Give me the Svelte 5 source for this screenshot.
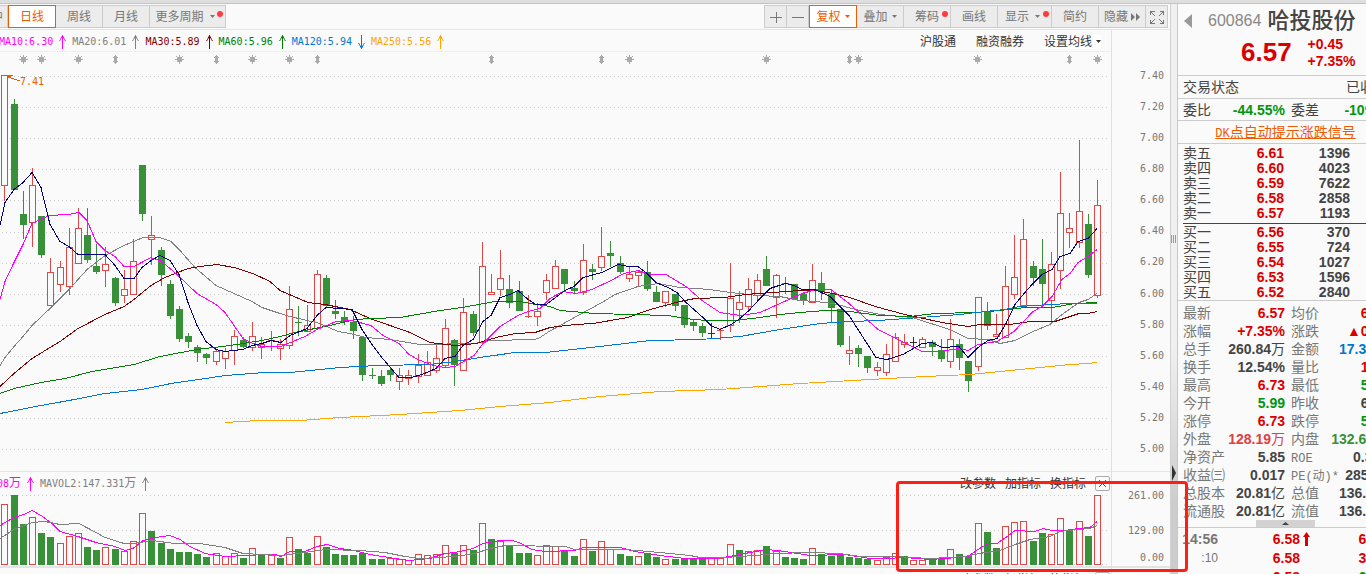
<script lang="ts">
  // kind, high, body top, body bottom, low (chart units)
  const candleData = `r 75 75 185 200,g 99 104 190 190,g 191 214 225 239,r 168 185 222 246,g 216 216 255 258,r 258 272 305 305,
r 261 267 284 291,r 228 247 286 294,r 208 228 263 263,g 208 235 260 263,g 244 266 272 274,r 247 264 270 286,
g 277 278 303 306,r 270 289 295 302,r 239 261 294 294,g 165 165 214 221,r 216 235 239 264,g 247 250 275 286,
g 280 284 316 319,g 306 309 339 342,g 333 336 342 348,g 345 347 353 362,g 353 354 358 364,r 349 351 361 364,
r 348 351 358 368,r 330 336 350 364,g 337 340 347 348,r 322 336 347 350,r 337 344 347 358,r 331 340 341 351,
r 339 344 348 359,r 286 309 345 348,g 306 322 323 336,r 305 325 331 331,r 270 274 328 328,g 275 278 306 307,
g 300 311 314 319,g 311 317 321 325,g 316 322 331 339,g 336 337 375 381,g 368 375 376 379,g 370 376 384 386,
g 368 370 375 381,r 368 375 381 389,r 370 375 378 384,r 354 365 376 382,r 351 362 375 375,r 345 358 370 372,
r 319 328 365 367,g 339 340 365 386,r 298 312 370 370,g 311 314 333 336,r 242 266 342 344,r 274 292 294 294,
r 250 278 289 295,g 275 289 303 308,g 281 291 311 311,r 295 316 317 318,r 303 311 316 325,r 274 280 292 299,
r 260 266 288 288,g 269 269 284 291,g 281 288 291 293,r 244 260 292 294,g 264 269 272 280,r 227 256 267 270,
g 241 253 256 267,g 256 263 272 274,r 267 274 278 281,r 270 272 275 286,g 261 272 289 291,g 286 292 302 302,
r 291 291 302 306,g 294 294 306 311,g 305 305 325 328,g 319 322 326 331,g 323 326 333 337,k 323 333 334 339,
r 328 330 331 340,r 263 298 325 331,r 291 302 309 322,r 278 289 306 309,r 274 280 295 300,g 256 269 286 286,
r 274 275 297 317,g 277 283 284 294,g 284 284 299 299,g 292 294 301 305,r 264 280 302 302,g 272 283 292 300,
g 290 294 308 322,g 309 309 345 347,r 336 350 353 364,g 345 348 354 367,g 356 356 368 373,r 362 367 370 375,
r 344 354 372 375,r 333 337 361 361,r 334 342 344 347,k 337 342 343 348,r 337 339 347 347,g 340 342 347 356,
g 339 350 359 362,r 319 339 361 367,g 339 344 358 370,g 361 361 381 392,r 297 297 366 370,g 302 311 326 330,
r 314 334 336 336,r 266 286 337 337,r 235 277 294 298,r 219 239 305 305,g 261 266 278 286,g 239 269 284 305,
r 252 264 300 322,r 172 213 270 288,r 213 228 232 247,r 140 211 242 247,g 214 224 275 278,r 180 205 295 297`;

  const volumeData = `r504 g495 g524 r517 g533 g537 r543 r536 r533 g547 g550 r547 g549 r551 r541 r513 g531 g543 g549 g552
g552 g554 g557 r553 r556 r553 g558 r548 g554 r555 g558 r537 g549 g553 r536 g547 g554 g555 g555 g553
g559 g559 r558 r559 r560 r554 r555 r554 r545 g553 r545 g550 r523 g539 r541 g546 g553 g553 r555 r545
r546 g551 g556 r539 g551 r541 r549 g554 g556 r556 g553 g557 r559 g559 g558 g559 g558 r558 r558 r544
g550 r551 r550 g546 r551 g557 g558 g559 r548 g554 g556 g554 g557 g558 g559 r560 r557 r553 g556 r560
r560 g559 g558 r549 g554 g556 r523 g532 g548 r526 r522 r521 g541 g533 r534 r518 g530 r521 g536 r495`;

  const barX = (i: number) => Math.floor(4.95 + i * 9.18) + 0.5;

  const candles = candleData.split(",").map((row, i) => {
    const [kind, ...v] = row.trim().split(" ");
    const [high, top, bottom, low] = v.map(Number);
    return { kind, high, top, bottom, low, x: barX(i) };
  });

  const volumes = volumeData.split(/\s+/).map((v, i) => ({
    kind: v[0],
    top: Number(v.slice(1)),
    x: barX(i),
  }));

  const priceLines = [
    { color: "#808080", points: "0,365 5,357 14,346 23,336 32,325 51,307 69,289 87,269 105,255 124,245 143,237 160,237 171,241 180,250 195,267 216,285 234,293 252,301 262,307 280,313 290,316 320,323 338,331 350,333 366,337 390,339 420,344 475,343 490,340 535,339 540,337 549,331 560,325 578,315 602,302 615,294 638,286 658,283 680,287 710,289 730,292 758,295 780,296 800,300 815,301 833,303 856,309 880,314 912,317 934,324 950,329 968,338 988,339 1000,343 1015,340 1033,331 1050,324 1062,314 1079,302 1088,299 1097,293" },
    { color: "#800000", points: "0,386 14,373 32,358 60,341 78,328 105,314 124,306 134,299 151,285 165,277 188,268 200,266 217,264 234,267 253,273 270,281 280,290 308,302 325,304 350,309 370,318 410,332 430,342 455,345 476,343 500,336 516,333 535,332 550,327 575,324 593,323 628,317 650,309 680,301 695,298 725,297 745,294 800,290 815,290 833,293 850,297 875,306 905,314 942,322 968,326 980,324 1010,324 1030,321 1055,321 1079,313 1088,313 1097,311" },
    { color: "#008000", points: "0,393 14,388 41,382 65,378 92,371 134,364 160,356 197,349 230,345 262,340 280,336 295,332 330,325 355,319 372,318 400,317 440,310 462,307 495,301 520,301 536,304 550,306 560,310 595,313 668,315 693,319 708,320 735,320 760,317 780,314 800,312 825,310 850,311 880,315 910,316 935,313 975,312 1000,310 1025,307 1052,307 1075,303 1097,302" },
    { color: "#0077d0", points: "0,413 41,405 69,400 105,393 142,389 171,383 206,378 225,375 265,372 290,372 340,367 378,365 430,364 455,361 480,357 515,352 545,352 600,346 650,340 700,339 740,336 780,329 820,323 850,321 878,320 920,317 960,314 985,311 1005,309 1020,306 1050,304 1070,303 1097,303" },
    { color: "#ffa500", points: "225,422 258,420 300,420 340,417 400,414 460,410 500,406 550,402 600,396 660,391 720,389 760,386 800,383 870,379 925,376 970,374 1000,371 1040,367 1070,364 1088,363 1097,362" },
    { color: "#ff00ff", points: "0,299 5,281 14,262 23,244 32,223 49,215 68,214 79,212 87,220 96,241 105,250 115,256 124,266 134,266 151,257 162,261 178,275 197,293 216,304 225,312 234,325 243,338 253,343 262,346 281,346 288,343 305,336 317,329 336,321 352,320 371,325 383,335 399,343 409,354 418,359 433,365 445,367 455,366 474,355 483,343 500,326 518,315 528,311 540,308 550,298 563,291 576,293 592,289 611,280 624,273 638,270 650,274 666,274 686,286 702,300 720,312 740,315 760,312 780,303 800,294 815,289 831,289 849,303 878,329 896,338 922,351 940,351 959,348 968,350 978,344 997,341 1014,331 1033,311 1042,306 1052,296 1062,279 1070,273 1078,262 1088,256 1097,249" },
    { color: "#000080", points: "0,225 5,202 14,189 23,182 32,172 41,187 50,224 60,241 69,246 78,254 105,254 115,265 124,278 134,278 142,267 151,260 160,255 170,260 179,274 188,302 197,325 206,341 216,349 225,351 243,349 252,345 262,343 271,340 281,342 290,335 307,328 317,315 326,307 352,309 362,329 372,344 381,356 399,377 411,377 422,374 436,368 445,358 455,356 463,345 473,339 483,321 491,315 500,297 510,294 518,290 528,299 536,304 546,304 565,290 574,286 583,277 602,272 618,264 629,266 638,266 647,273 656,282 668,287 677,292 686,302 703,317 711,325 720,329 731,324 740,318 749,310 760,298 770,288 779,285 786,283 794,285 802,289 815,289 830,296 849,315 876,357 887,359 903,354 922,343 932,342 942,347 959,346 968,357 978,347 988,340 997,338 1006,323 1015,304 1024,293 1033,283 1042,274 1052,269 1060,256 1070,253 1078,241 1088,238 1097,228" },
  ];

  const volumeLines = [
    { color: "#ff00ff", points: "0,525 14,517 24,514 32,510 41,515 52,523 60,531 78,536 96,542 115,546 125,550 133,548 143,540 155,537 170,535 180,539 190,546 205,553 225,556 248,555 262,554 275,554 281,556 290,551 305,551 317,546 327,544 340,548 354,550 370,554 395,558 409,560 430,558 445,553 455,552 473,548 483,543 500,540 513,540 521,543 532,549 545,551 575,550 583,547 620,547 635,551 660,555 685,558 715,558 730,556 750,552 767,549 785,551 810,555 845,554 870,558 885,558 905,557 930,559 945,558 968,556 978,549 988,543 997,543 1010,534 1015,530 1035,531 1043,528 1052,530 1065,530 1078,528 1090,527 1097,521" },
    { color: "#808080", points: "0,538 14,529 32,522 45,521 60,524 79,523 96,532 105,537 124,543 134,543 152,540 175,543 200,543 225,547 243,553 281,555 305,552 325,549 360,550 385,552 405,556 420,558 455,556 475,553 490,548 505,545 565,546 575,549 595,549 625,549 660,552 690,555 700,557 725,557 755,555 775,553 810,552 840,553 860,556 895,556 930,558 965,556 985,552 1000,550 1015,544 1030,539 1050,536 1060,531 1078,529 1090,528 1097,525" },
  ];

  const gridLines = [76, 107, 138, 169, 200, 232, 263, 294, 325, 356, 387, 418, 449];
  const axis = ["7.40", "7.20", "7.00", "6.80", "6.60", "6.40", "6.20", "6.00", "5.80", "5.60", "5.40", "5.20", "5.00"];
  const stars = [23, 41, 78, 179, 252, 289, 629, 766, 858, 977, 1097];
  const pins = [115, 216, 317, 491, 601, 849, 1069];

  const averages = [
    { text: "MA10:6.30", color: "magenta", up: true },
    { text: "MA20:6.01", color: "gray", up: true },
    { text: "MA30:5.89", color: "maroon", up: true },
    { text: "MA60:5.96", color: "green", up: true },
    { text: "MA120:5.94", color: "blue", up: false },
    { text: "MA250:5.56", color: "orange", up: true },
  ];

  const sells = [["卖五", "6.61", "1396"], ["卖四", "6.60", "4023"], ["卖三", "6.59", "7622"], ["卖二", "6.58", "2858"], ["卖一", "6.57", "1193"]];
  const buys = [["买一", "6.56", "370"], ["买二", "6.55", "724"], ["买三", "6.54", "1027"], ["买四", "6.53", "1596"], ["买五", "6.52", "2840"]];

  // label, value, unit, class, label, value, unit, class
  const stats = [
    ["最新", "6.57", "", "up", "均价", "6.52", "", "up"],
    ["涨幅", "+7.35%", "", "up", "涨跌", "▲0.45", "", "up"],
    ["总手", "260.84", "万", "", "金额", "17.36", "亿", "blue"],
    ["换手", "12.54%", "", "", "量比", "1.98", "", "up"],
    ["最高", "6.73", "", "up", "最低", "5.98", "", "down"],
    ["今开", "5.99", "", "down", "昨收", "6.12", "", ""],
    ["涨停", "6.73", "", "up", "跌停", "5.51", "", "down"],
    ["外盘", "128.19", "万", "outer", "内盘", "132.65", "万", "inner"],
    ["净资产", "5.85", "", "", "ROE", "0.393", "", ""],
    ["收益㈢", "0.017", "", "", "PE(动)*", "285.44", "", ""],
    ["总股本", "20.81", "亿", "", "总值", "136.7", "亿", ""],
    ["流通股", "20.81", "亿", "", "流值", "136.7", "亿", ""],
  ];

  const tools = ["改参数", "加指标", "换指标"];
</script>

{#snippet arrow(up: boolean)}
  <svg class="arrow" viewBox="0 0 7 14" class:flip={!up}>
    <path d="M3.5 0.5V14M3.5 0.5L1.5 4.5M3.5 0.5L5.5 4.5M1.5 4.5L0.5 6M5.5 4.5L6.5 6" />
  </svg>
{/snippet}

{#snippet caret()}
  <svg class="caret" viewBox="0 0 5 3"><path d="M0 0H5L2.5 3Z" /></svg>
{/snippet}

{#snippet indicatorTools()}
  <div class="tools">
    {#each tools as tool}
      <button class="text-button">{tool}</button>
    {/each}
    <button class="close" aria-label="关闭">
      <svg viewBox="0 0 13 13"><path d="M3 3L10 10M10 3L3 10" /></svg>
    </button>
  </div>
{/snippet}

{#snippet bookRows(rows: string[][])}
  <table class="book">
    <tbody>
      {#each rows as [label, price, amount]}
        <tr><th>{label}</th><td class="up">{price}</td><td>{amount}</td><td></td></tr>
      {/each}
    </tbody>
  </table>
{/snippet}

<div class="app">
  <div class="strip"></div>
  <div class="body">
    <main class="main">
      <div class="toolbar">
        <div class="group">
          <button class="btn cut">中</button>
          <button class="btn active">日线</button>
          <button class="btn">周线</button>
          <button class="btn">月线</button>
          <button class="btn more">更多周期{@render caret()}<i class="dot"></i></button>
        </div>
        <div class="group">
          <button class="btn icon" aria-label="放大"><svg viewBox="0 0 12 12"><path d="M0 6.5H12M6.5 1V12" /></svg></button>
          <button class="btn icon" aria-label="缩小"><svg viewBox="0 0 12 12"><path d="M0 6.5H12" /></svg></button>
          <button class="btn active">复权{@render caret()}</button>
          <button class="btn">叠加{@render caret()}</button>
          <button class="btn">筹码<i class="dot"></i></button>
          <button class="btn">画线</button>
          <button class="btn wide">显示{@render caret()}<i class="dot"></i></button>
          <button class="btn">简约</button>
          <button class="btn tight">隐藏<svg class="forward" viewBox="0 0 9 8"><path d="M0 0L4 4L0 8ZM5 0L9 4L5 8Z" /></svg></button>
          <button class="btn icon" aria-label="全屏">
            <svg class="expand" viewBox="0 0 14 14"><path d="M0.5 4.5V1.5H4.5M1 2L5 6M9.5 1.5H13.5V4.5M13 2L9 6M0.5 9.5V13.5H4.5M1 13L5 9M13.5 9.5V13.5H9.5M13 13L9 9" /></svg>
          </button>
        </div>
      </div>

      <div class="charts">
        <div class="plots">
          <div class="legend">
            {#each averages as item}
              <span class="average {item.color}">{item.text}{@render arrow(item.up)}</span>
            {/each}
            <div class="links">
              <button class="text-button">沪股通</button>
              <button class="text-button">融资融券</button>
              <button class="text-button white">设置均线{@render caret()}</button>
            </div>
          </div>

          <svg class="price" viewBox="0 52 1111 419" preserveAspectRatio="none">
            {#each gridLines as y}
              <line class="grid" x1="2" x2="1108" y1={y + 0.5} y2={y + 0.5} />
            {/each}
            {#each stars as x}
              <path class="mark" transform="translate({x} 59)" d="M0.5 -4V5M-4 0.5H5M-2.5 -2.5L3.5 3.5M3.5 -2.5L-2.5 3.5M-2 -1.5H3M-2 2.5H3M-1.5 -2V3M2.5 -2V3" />
            {/each}
            {#each pins as x}
              <path class="pin" transform="translate({x} 59)" d="M0.5 -4L3 -1H2V2H3L0.5 5L-2 2H-1V-1H-2Z" />
            {/each}
            {#each candles as c}
              <g class={c.kind}>
                {#if c.kind === "r" && c.bottom - c.top > 1}
                  <path d="M{c.x} {c.high}V{c.top}M{c.x} {c.bottom}V{c.low + 1}" />
                  <rect class="hollow" x={c.x - 3} y={c.top + 0.5} width="6" height={c.bottom - c.top} />
                {:else}
                  <path d="M{c.x} {c.high}V{c.low}" />
                  <rect class="solid" x={c.x - 3.5} y={c.top} width="7" height={c.bottom - c.top} />
                {/if}
              </g>
            {/each}
            {#each priceLines as line}
              <polyline points={line.points} stroke={line.color} transform="translate(0 0.5)" />
            {/each}
            <path class="peak" d="M8 75.5H13M8 76.5H11M8 77L20 81" />
            <text class="peak-text" x="20" y="85">7.41</text>
          </svg>

          <section class="volume">
            <div class="volume-head">
              <span class="average magenta lead"><span>08<span class="unit">万</span></span>{@render arrow(true)}</span>
              <span class="average gray"><span>MAVOL2:147.331<span class="unit">万</span></span>{@render arrow(true)}</span>
              {@render indicatorTools()}
            </div>
            <svg class="bars" viewBox="0 493 1111 73" preserveAspectRatio="none">
              {#each [495, 530, 564] as y}
                <line class="grid" x1="2" x2="1108" y1={y + 0.5} y2={y + 0.5} />
              {/each}
              {#each volumes as v}
                <g class={v.kind}>
                  {#if v.kind === "r"}
                    <rect class="hollow" x={v.x - 3} y={v.top + 0.5} width="6" height={564 - v.top} />
                  {:else}
                    <rect class="solid" x={v.x - 3.5} y={v.top} width="7" height={565 - v.top} />
                  {/if}
                </g>
              {/each}
              {#each volumeLines as line}
                <polyline points={line.points} stroke={line.color} transform="translate(0 0.5)" />
              {/each}
            </svg>
          </section>
          <div class="volume-head">{@render indicatorTools()}</div>
        </div>

        <div class="axes">
          <div class="price-axis">
            {#each axis as label}<span>{label}</span>{/each}
          </div>
          <div class="volume-axis">
            <span>261.00</span><span>129.00</span><span>0.00</span>
          </div>
        </div>
      </div>
    </main>

    <div class="splitter">
      <svg class="grip" viewBox="0 0 6 8"><path d="M0.5 0V8M2.5 0V8M4.5 0V8" /></svg>
      <svg class="handle" viewBox="0 0 4 16"><path d="M0 0L4 8L0 16Z" /></svg>
    </div>

    <aside class="quote">
      <div class="sheet">
        <header class="head">
          <div class="name">
            <svg class="back" viewBox="0 0 8 14"><path d="M8 0V14L0 7Z" /></svg>
            <span class="code">600864</span>
            <h1>哈投股份</h1>
          </div>
          <div class="last up">
            <strong>6.57</strong>
            <div class="change"><span>+0.45</span><span>+7.35%</span></div>
          </div>
        </header>
        <div class="row state"><span>交易状态</span><span>已收盘</span></div>
        <div class="row ratio">
          <span>委比</span><b class="down">-44.55%</b><span>委差</span><b class="down">-10912</b>
        </div>
        <div class="row promo"><a href="#dk"><span class="latin">DK</span>点自动提示涨跌信号</a></div>
        <div class="books">
          {@render bookRows(sells)}
          <hr />
          {@render bookRows(buys)}
        </div>
        <table class="stats">
          <tbody>
            {#each stats as s}
              <tr>
                <th>{s[0]}</th>
                <td class={s[3]}>{s[1]}<small>{s[2]}</small></td>
                <th><span class:latin={s[4] === "ROE" || s[4].startsWith("PE")}>{s[4]}</span></th>
                <td class={s[7]}>{s[5]}<small>{s[6]}</small></td>
              </tr>
            {/each}
          </tbody>
        </table>
        <button class="collapse" aria-label="收起"><svg viewBox="0 0 7 3"><path d="M0 3L3.5 0L7 3Z" /></svg></button>
        <div class="ticks">
          <div class="tick"><b class="time">14:56</b><b class="up">6.58</b><svg class="tick-arrow" viewBox="0 0 7 14"><path d="M3.5 0L7 5H5V14H2V5H0Z" /></svg><b class="up">65</b></div>
          <div class="tick"><span class="time second">:10</span><b class="up">6.58</b><i></i><b class="up">38</b></div>
          <div class="tick"><span class="time second"></span><b class="up">6.58</b><i></i><b class="down">60</b></div>
        </div>
      </div>
    </aside>

    <div class="highlight"></div>
  </div>
</div>

<style>
  :global(body) {
    overflow: hidden;
    background: #fafafa;
  }

  .app {
    display: flex;
    flex-direction: column;
    height: 100vh;
    overflow: hidden;
    color: #444;
    font-family: "Liberation Sans", "Noto Sans CJK SC", sans-serif;
    font-size: 12px;
  }

  .app * {
    box-sizing: border-box;
  }

  .strip {
    flex: none;
    height: 4px;
    background: #dedede;
    border-bottom: 1px solid #c4c4c4;
  }

  .body {
    position: relative;
    display: flex;
    flex: 1;
    min-height: 0;
  }

  .main {
    flex: 1;
    min-width: 0;
    border-right: 1px solid #d0d0d0;
  }

  button {
    margin: 0;
    padding: 0;
    border: 0;
    background: none;
    color: inherit;
    font: inherit;
    cursor: pointer;
  }

  svg {
    display: block;
    flex: none;
    fill: none;
    stroke: none;
  }

  .toolbar {
    display: flex;
    justify-content: space-between;
    height: 26px;
    padding: 1px 2px 1px 0;
    border-bottom: 1px solid #e4e4e4;
  }

  .group {
    display: flex;
  }

  .btn {
    position: relative;
    display: flex;
    align-items: center;
    justify-content: center;
    gap: 4px;
    width: 47px;
    height: 23px;
    border: 1px solid #ccc;
    border-left: 0;
    background: #ececec;
    color: #777;
    line-height: 20px;
    white-space: nowrap;
  }

  .btn.active {
    width: 48px;
    border: 1px solid #f05a00;
    background: #fff;
    color: #f05a00;
  }

  .btn.cut {
    width: 8px;
    justify-content: flex-end;
    padding-right: 4px;
    overflow: hidden;
  }

  .btn.more {
    width: 76px;
    gap: 6px;
    padding-right: 5px;
  }

  .btn.wide {
    width: 54px;
    gap: 6px;
    padding-right: 4px;
  }

  .btn.tight {
    gap: 3px;
  }

  .btn.icon {
    width: 22px;
  }

  .btn.icon:first-child {
    width: 23px;
    border-left: 1px solid #ccc;
  }

  .btn.icon svg {
    width: 12px;
    height: 12px;
    stroke: #777;
    shape-rendering: crispEdges;
  }

  .btn.icon .expand {
    width: 14px;
    height: 14px;
  }

  .caret {
    width: 5px;
    height: 3px;
    fill: currentColor;
  }

  .forward {
    width: 9px;
    height: 8px;
    fill: #777;
  }

  .dot {
    position: absolute;
    top: 5px;
    right: 2px;
    width: 6px;
    height: 6px;
    border-radius: 50%;
    background: #ff3b3b;
  }

  .charts {
    display: flex;
  }

  .plots {
    flex: 1;
    min-width: 0;
  }

  .legend {
    display: flex;
    align-items: center;
    height: 22px;
    margin-left: -1px;
    padding-top: 2px;
    border-bottom: 1px solid #eee;
  }

  .average {
    display: flex;
    align-items: center;
    gap: 6px;
    margin-right: 6px;
    font-family: "DejaVu Sans Mono", "Noto Sans CJK SC", monospace;
    font-size: 10px;
    line-height: 14px;
    white-space: nowrap;
  }

  .unit {
    font-size: 12px;
  }

  .arrow {
    width: 7px;
    height: 14px;
    stroke: currentColor;
  }

  .flip {
    transform: rotate(180deg);
  }

  .magenta {
    color: #f0f;
  }

  .gray {
    color: #808080;
  }

  .maroon {
    color: #800000;
  }

  .green {
    color: #008000;
  }

  .orange {
    color: #ffa500;
  }

  .links {
    display: flex;
    gap: 20px;
    margin-left: auto;
    padding-right: 10px;
    color: #333;
  }

  .text-button {
    display: flex;
    align-items: center;
    gap: 4px;
    line-height: 14px;
    white-space: nowrap;
  }

  .white {
    background: #fff;
  }

  .price,
  .bars {
    width: 100%;
    shape-rendering: crispEdges;
  }

  .price {
    height: 419px;
  }

  .bars {
    height: 73px;
  }

  .grid {
    stroke: #ccc;
    stroke-dasharray: 1 3;
  }

  .mark {
    stroke: #aaa;
  }

  .pin {
    fill: #aaa;
  }

  .r {
    stroke: #e04848;
    fill: #e04848;
  }

  .g {
    stroke: #389038;
    fill: #389038;
  }

  .k {
    stroke: #333;
    fill: #333;
  }

  .hollow {
    fill: #fafafa;
  }

  .solid {
    stroke: none;
  }

  .peak {
    stroke: #f05a00;
  }

  .peak-text {
    fill: #f05a00;
    font-family: "DejaVu Sans Mono", monospace;
    font-size: 10px;
  }

  .volume {
    border-top: 1px solid #e4e4e4;
    border-bottom: 2px solid #e4e4e4;
  }

  .volume-head {
    display: flex;
    align-items: center;
    height: 21px;
    padding-top: 2px;
  }

  .lead {
    margin-left: -3px;
  }

  .tools {
    display: flex;
    align-items: center;
    gap: 9px;
    margin-left: auto;
    padding-right: 1px;
    color: #333;
  }

  .close {
    width: 15px;
    height: 15px;
    border: 1px solid #aaa;
    border-radius: 2px;
  }

  .close svg {
    width: 13px;
    height: 13px;
    stroke: #555;
  }

  .axes {
    width: 59px;
    flex: none;
    border-left: 1px solid #e0e0e0;
    color: #777;
    font-family: "DejaVu Sans Mono", monospace;
    font-size: 10px;
    text-align: right;
  }

  .price-axis {
    display: grid;
    grid-template-rows: repeat(13, 1fr);
    align-items: center;
    height: 441px;
    padding: 30px 6px 7px 0;
  }

  .volume-axis {
    display: grid;
    grid-template-rows: 35px 35px 19px;
    align-items: center;
    height: 97px;
    padding: 6px 6px 0 0;
    border-top: 1px solid #e4e4e4;
    border-bottom: 2px solid #e4e4e4;
  }

  .splitter {
    display: flex;
    flex: none;
    flex-direction: column;
    align-items: flex-start;
    width: 7px;
    background: linear-gradient(#f0f0f0 0 60%, #ccc 88%);
    border-right: 1px solid #c8c8c8;
  }

  .grip {
    width: 6px;
    height: 8px;
    margin-top: 231px;
    stroke: #999;
    shape-rendering: crispEdges;
  }

  .handle {
    width: 4px;
    height: 16px;
    margin: 222px 0 0 1px;
    fill: #333;
  }

  .quote {
    flex: none;
    width: 188px;
    overflow: hidden;
    font-size: 14px;
  }

  .sheet {
    width: 215px;
  }

  .head {
    height: 72px;
    padding-top: 4px;
    border-bottom: 1px solid #ccc;
  }

  .name {
    display: flex;
    align-items: center;
    height: 26px;
    padding-left: 6px;
  }

  .back {
    width: 8px;
    height: 14px;
    fill: #999;
  }

  .code {
    margin: 0 6px 0 16px;
    color: #888;
    font-size: 16px;
  }

  h1 {
    margin: 0;
    color: #444;
    font-size: 22px;
    font-weight: 500;
    line-height: 26px;
  }

  .last {
    display: flex;
    align-items: center;
    gap: 16px;
    height: 37px;
    padding-left: 63px;
  }

  .last strong {
    font-size: 26px;
  }

  .change {
    display: flex;
    flex-direction: column;
    font-weight: bold;
    line-height: 17px;
  }

  .up {
    color: #d90000;
  }

  .down {
    color: #00960f;
  }

  .blue {
    color: #0077d0;
  }

  .outer {
    color: #e04040;
  }

  .inner {
    color: #389038;
  }

  .row {
    display: flex;
    align-items: center;
    padding: 0 5px;
    border-bottom: 1px solid #ccc;
    line-height: 20px;
  }

  .state {
    justify-content: space-between;
    height: 23px;
  }

  .ratio {
    display: grid;
    grid-template-columns: 28px 74px 34px 1fr;
    height: 22px;
  }

  .ratio b {
    text-align: right;
  }

  .ratio span {
    white-space: nowrap;
  }

  .ratio span:nth-child(3) {
    padding-left: 6px;
  }

  .promo {
    justify-content: center;
    height: 23px;
  }

  .promo a {
    color: #f05a00;
    white-space: nowrap;
  }

  .latin {
    font-family: "Liberation Mono", "Noto Sans CJK SC", monospace;
    font-size: 12px;
    line-height: 12px;
  }

  .books {
    padding: 2px 0 0;
    border-bottom: 1px solid #ccc;
  }

  hr {
    height: 1px;
    margin: 2px 0 1px 5px;
    border: 0;
    background: #444;
  }

  table {
    width: 100%;
    table-layout: fixed;
    border-collapse: collapse;
  }

  th,
  td {
    padding: 0;
    white-space: nowrap;
  }

  th {
    font-weight: normal;
    text-align: left;
  }

  td {
    font-weight: bold;
    text-align: right;
  }

  .book tr {
    height: 15px;
    line-height: 15px;
  }

  .book th {
    width: 56px;
    padding-left: 5px;
  }

  .book td:nth-child(2) {
    width: 50px;
  }

  .book td:nth-child(3) {
    width: 66px;
  }

  .stats {
    margin-top: 3px;
    color: #444;
  }

  .stats tr {
    height: 18px;
    line-height: 18px;
  }

  .stats th {
    width: 50px;
    padding-left: 5px;
    color: #777;
  }

  .stats td:nth-child(2) {
    width: 57px;
  }

  .stats th:nth-child(3) {
    width: 40px;
    padding-left: 6px;
  }

  .stats td:last-child {
    padding-right: 5px;
  }

  small {
    font-size: 14px;
    font-weight: normal;
  }

  .collapse {
    display: flex;
    align-items: center;
    justify-content: center;
    width: 59px;
    height: 7px;
    margin-left: 78px;
    background: #d2d2d2;
  }

  .collapse svg {
    width: 7px;
    height: 3px;
    fill: #444;
  }

  .ticks {
    padding-top: 1px;
    border-top: 1px solid #ccc;
  }

  .tick {
    display: grid;
    grid-template-columns: 40px 82px 13px 1fr;
    align-items: center;
    height: 19px;
    padding-right: 19px;
    text-align: right;
  }

  .time {
    color: #777;
  }

  .second {
    font-size: 12px;
  }

  .tick-arrow {
    width: 7px;
    height: 14px;
    margin-left: 3px;
    fill: #d90000;
  }

  .highlight {
    position: absolute;
    right: 178px;
    bottom: 2px;
    width: 292px;
    height: 91px;
    border: 3px solid #ff1e14;
    border-radius: 4px;
    pointer-events: none;
  }
</style>
